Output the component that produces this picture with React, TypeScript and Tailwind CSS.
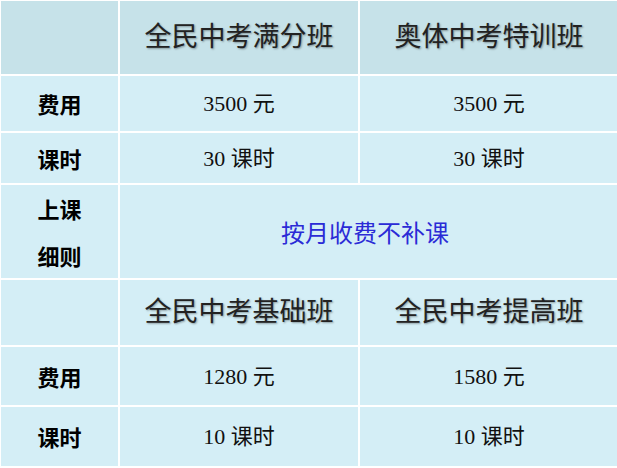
const serif = "font-['Liberation_Serif','Noto_Sans_CJK_SC',serif]"
const shadow = '[text-shadow:1px_1px_2px_rgba(0,0,0,0.35)]'

function Label({ children }: { children: React.ReactNode }) {
  return (
    <div className="bg-[#d4eef6] flex items-center justify-center text-[22px] font-bold text-black font-['Noto_Sans_CJK_SC',sans-serif]">
      {children}
    </div>
  )
}

function Cell({ children }: { children: React.ReactNode }) {
  return (
    <div className={`bg-[#d4eef6] flex items-center justify-center text-[22px] text-[#111] ${serif}`}>
      {children}
    </div>
  )
}

function Head({ children, dark }: { children?: React.ReactNode; dark?: boolean }) {
  return (
    <div className={`${dark ? 'bg-[#c6e2e9]' : 'bg-[#d4eef6]'} flex items-center justify-center text-[27px] text-[#222] ${shadow} ${serif}`}>
      {children}
    </div>
  )
}

export default function App() {
  return (
    <div className="w-[617px] h-[468px] bg-white pt-px pl-px overflow-hidden">
      <div className="grid grid-cols-[117px_238px_258px] grid-rows-[73px_55px_50px_93px_65px_58px_59px] gap-[2px]">
        <Head dark />
        <Head dark>全民中考满分班</Head>
        <Head dark>奥体中考特训班</Head>

        <Label>费用</Label>
        <Cell>3500 元</Cell>
        <Cell>3500 元</Cell>

        <Label>课时</Label>
        <Cell>30 课时</Cell>
        <Cell>30 课时</Cell>

        <div className="bg-[#d4eef6] flex flex-col items-center justify-center gap-[25px] text-[22px] font-bold text-black leading-none font-['Noto_Sans_CJK_SC',sans-serif]">
          <span>上课</span>
          <span>细则</span>
        </div>
        <div className="col-span-2 bg-[#d4eef6] flex items-center justify-center text-[24px] text-[#2b2bd6] font-['Noto_Sans_CJK_SC',sans-serif] pr-[8px]">
          按月收费不补课
        </div>

        <Head />
        <Head>全民中考基础班</Head>
        <Head>全民中考提高班</Head>

        <Label>费用</Label>
        <Cell>1280 元</Cell>
        <Cell>1580 元</Cell>

        <Label>课时</Label>
        <Cell>10 课时</Cell>
        <Cell>10 课时</Cell>
      </div>
    </div>
  )
}
